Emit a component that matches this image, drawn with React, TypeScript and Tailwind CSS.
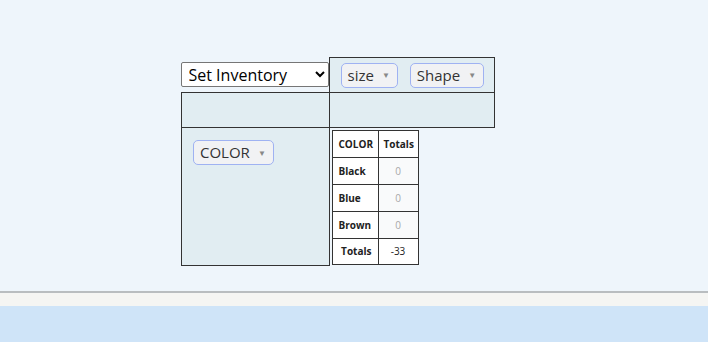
import React from 'react';

const font = { fontFamily: '"Open Sans", "Noto Sans", sans-serif' };

const Pill: React.FC<{ label: string }> = ({ label }) => (
    <span className="inline-flex items-center h-[25px] pl-[6px] pr-[7px] gap-[8px] rounded-[5px] border border-[#9fb2f2] bg-[#f1f2f4] text-[15px] text-[#333] leading-none">
        {label}
        <span className="text-[8px] text-[#888]">▼</span>
    </span>
);

const rows = ['Black', 'Blue', 'Brown'];

const OutputTable: React.FC = () => (
    <table className="border-collapse text-[10px] text-[#222]">
        <tbody>
            <tr className="h-[27px]">
                <th className="w-[46px] border border-[#333] bg-white font-bold text-left pl-[6px]">COLOR</th>
                <th className="w-[40px] border border-[#333] bg-white font-bold text-left pl-[5px]">Totals</th>
            </tr>
            {rows.map((r) => (
                <tr key={r} className="h-[27px]">
                    <th className="border border-[#333] bg-white font-bold text-left pl-[6px]">{r}</th>
                    <td className="border border-[#333] bg-[#f9fafb] text-center text-[#a8a8a8]">0</td>
                </tr>
            ))}
            <tr className="h-[26px]">
                <th className="border border-[#333] bg-white font-bold text-right pr-[6px]">Totals</th>
                <td className="border border-[#333] bg-white text-center">-33</td>
            </tr>
        </tbody>
    </table>
);

const App: React.FC = () => {
    return (
        <div className="w-[708px] h-[342px] flex flex-col bg-[#eef5fb]" style={font}>
            <div className="h-[291px] pt-[57px] pl-[181px]">
                <table className="border-collapse">
                    <tbody>
                        <tr className="h-[35px]">
                            <td className="w-[146px] p-0 align-middle">
                                <select
                                    className="w-[148px] h-[25px] -ml-px border border-[#767676] bg-white text-[16px] text-black pl-[3px] rounded-[2px]"
                                    defaultValue="Set Inventory"
                                >
                                    <option>Set Inventory</option>
                                </select>
                            </td>
                            <td className="w-[165px] border border-[#333] bg-[#e1edf2] pl-[11px] align-middle">
                                <div className="flex gap-[12px]">
                                    <Pill label="size" />
                                    <Pill label="Shape" />
                                </div>
                            </td>
                        </tr>
                        <tr className="h-[35px]">
                            <td className="border border-[#333] bg-[#e1edf2]"></td>
                            <td className="border border-[#333] bg-[#e1edf2]"></td>
                        </tr>
                        <tr className="h-[136px]">
                            <td className="border border-[#333] bg-[#e1edf2] align-top pl-[11px] pt-[12px]">
                                <Pill label="COLOR" />
                            </td>
                            <td className="align-top pl-[2px] pt-[2px] p-0">
                                <OutputTable />
                            </td>
                        </tr>
                    </tbody>
                </table>
            </div>
            <div className="h-[2px] bg-[#b9bdc0]" />
            <div className="h-[13px] bg-[#f5f5f3]" />
            <div className="flex-1 bg-[#cfe4f8]" />
        </div>
    );
};

export default App;
